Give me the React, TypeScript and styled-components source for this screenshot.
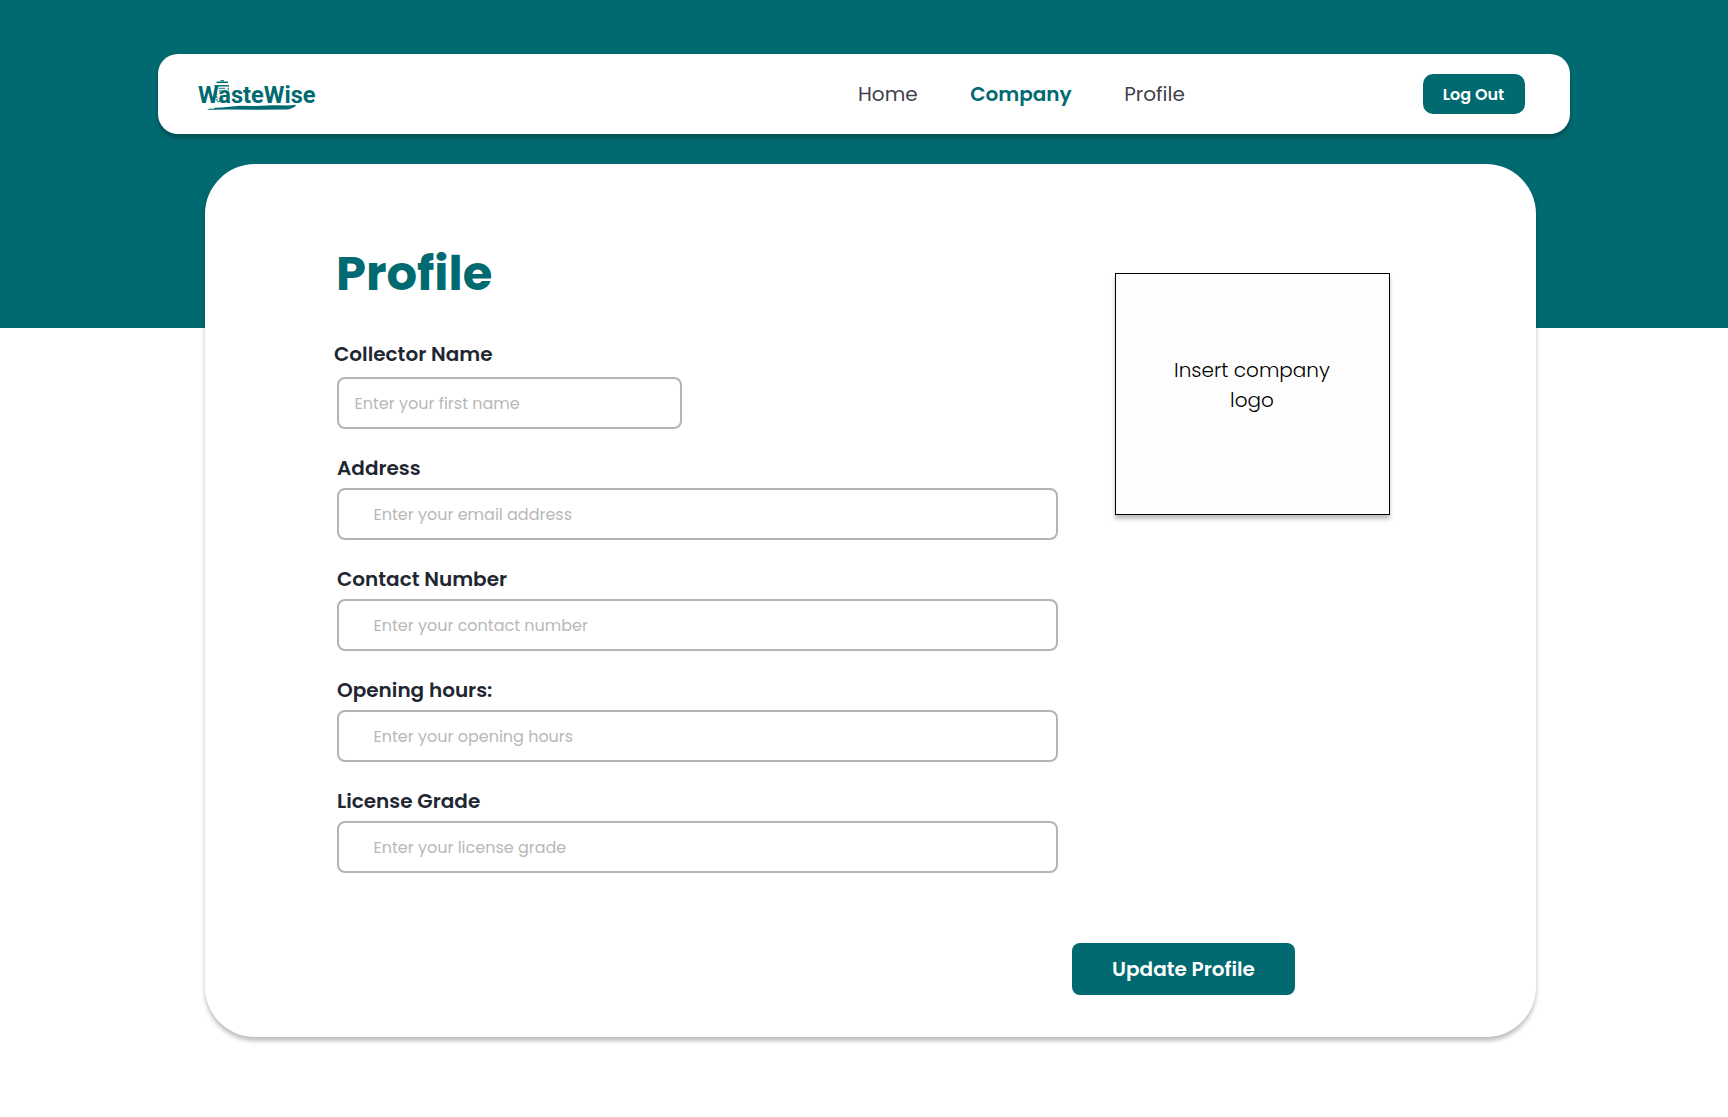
import React from 'react';
import styled, { createGlobalStyle } from 'styled-components';

const teal = '#006a70';
const shadow = '0 4px 4px rgba(0, 0, 0, 0.25)';

const GlobalStyle = createGlobalStyle`
  *, *::before, *::after { box-sizing: border-box; }
  body {
    margin: 0;
    background: #fff;
    font-family: Poppins, Inter, sans-serif;
  }
`;

const Page = styled.div`
  display: flex;
  flex-direction: column;
  width: 1728px;
  height: 1117px;
  padding-top: 54px;
  background: linear-gradient(${teal} 328px, #fff 328px);
`;

const NavBar = styled.header`
  display: flex;
  align-items: center;
  width: 1412px;
  height: 80px;
  margin-left: 158px;
  padding: 0 45px 0 40px;
  border-radius: 20px;
  background: #fff;
  box-shadow: ${shadow};
`;

const LogoMark = styled.svg`
  flex: none;
  width: 120px;
  height: 34px;
  margin-bottom: -2px;
`;

const NavLinks = styled.nav`
  display: flex;
  gap: 52.5px;
  margin-left: 540px;
`;

const NavLink = styled.a<{ $active?: boolean }>`
  font-size: 20px;
  line-height: 30px;
  font-weight: ${(p) => (p.$active ? 600 : 400)};
  color: ${(p) => (p.$active ? teal : '#41414d')};
  text-decoration: none;
`;

const Button = styled.button`
  border: 0;
  padding: 0;
  background: ${teal};
  color: #fff;
  font-family: inherit;
  font-weight: 600;
`;

const LogOutButton = styled(Button)`
  width: 102px;
  height: 40px;
  margin-left: auto;
  padding-right: 1px;
  border-radius: 10px;
  font-size: 16px;
`;

const Card = styled.main`
  width: 1331px;
  height: 873px;
  margin: 30px 0 0 205px;
  padding: 73px 0 0 132px;
  border-radius: 50px;
  background: #fff;
  box-shadow: ${shadow};
`;

const Columns = styled.div`
  display: flex;
  align-items: flex-start;
  gap: 57px;
`;

const Form = styled.form`
  display: flex;
  flex-direction: column;
  width: 721px;
`;

const Title = styled.h1`
  margin: 0 0 28px -1px;
  font-size: 48px;
  line-height: 74px;
  font-weight: 700;
  color: ${teal};
`;

const Fields = styled.div`
  display: flex;
  flex-direction: column;
  gap: 24px;
`;

const Field = styled.div<{ $short?: boolean }>`
  display: flex;
  flex-direction: column;
  gap: ${(p) => (p.$short ? 8 : 5)}px;
`;

const Label = styled.label<{ $short?: boolean }>`
  margin-left: ${(p) => (p.$short ? -3 : 0)}px;
  font-size: 20px;
  line-height: 30px;
  font-weight: 600;
  color: #1f2732;
`;

const Input = styled.input<{ $short?: boolean }>`
  width: ${(p) => (p.$short ? '345px' : '100%')};
  height: 52px;
  padding: 0 16px 0 ${(p) => (p.$short ? 15.5 : 34.5)}px;
  border: 2px solid #b4b4b4;
  border-radius: 8px;
  background: transparent;
  outline: none;
  font-family: inherit;
  font-size: 16px;
  color: #1f2732;

  &::placeholder {
    color: #b8b8b8;
    opacity: 1;
  }
`;

const LogoUpload = styled.div`
  width: 275px;
  height: 242px;
  margin-top: 36px;
  padding: 81px 50px 0 49px;
  border: 1px solid #000;
  box-shadow: ${shadow};
  background: #fdfdfd;
  font-size: 20px;
  line-height: 30px;
  font-weight: 300;
  text-align: center;
  color: #000;
`;

const UpdateButton = styled(Button)`
  width: 223px;
  height: 52px;
  margin: 70px 0 0 735px;
  border-radius: 8px;
  font-size: 20px;
`;

const links = [
  { name: 'Home' },
  { name: 'Company', active: true },
  { name: 'Profile' },
];

const fields = [
  { label: 'Collector Name', hint: 'Enter your first name', short: true },
  { label: 'Address', hint: 'Enter your email address' },
  { label: 'Contact Number', hint: 'Enter your contact number' },
  { label: 'Opening hours:', hint: 'Enter your opening hours' },
  { label: 'License Grade', hint: 'Enter your license grade' },
];

function Logo() {
  return (
    <LogoMark viewBox="0 0 120 34" role="img" aria-label="WasteWise">
      <text
        x="0"
        y="24.5"
        fill={teal}
        fontFamily="Roboto, sans-serif"
        fontWeight="700"
        fontSize="24"
        textLength="117.5"
        lengthAdjust="spacingAndGlyphs"
      >
        WasteWise
      </text>
      <g fill="none" stroke={teal}>
        <path d="M22.5 2.8h3.5" strokeWidth="1.2" />
        <path d="M18.5 4.3h11.5" strokeWidth="1.5" />
        <path d="M16.5 7.8h14.5" strokeWidth="1.4" />
        <path d="M18.2 8.5l.9 15.2h10.4l.8-15.2" strokeWidth="1" strokeDasharray="2.4 .7" />
        <path d="M20.5 10.3h7M21 13.2l2-1.3M22.5 17.5l1.5 1.2M23 21h2.5" strokeWidth=".9" />
      </g>
      <path
        fill={teal}
        d="M9 31.7 12 30.6 15 30.9 17 29.8 24 29.4 34 28.6 42 27.7 58 28 75 27.3 90 27.6 98 26.8 97 28.7 92 31 89 31.6 60 31.8 30 31.4 14 31.7Z"
      />
    </LogoMark>
  );
}

export default function App() {
  return (
    <>
      <GlobalStyle />
      <Page>
        <NavBar>
          <Logo />
          <NavLinks>
            {links.map((l) => (
              <NavLink key={l.name} $active={l.active}>
                {l.name}
              </NavLink>
            ))}
          </NavLinks>
          <LogOutButton>Log Out</LogOutButton>
        </NavBar>
        <Card>
          <Columns>
            <Form>
              <Title>Profile</Title>
              <Fields>
                {fields.map((f, i) => (
                  <Field key={f.label} $short={f.short}>
                    <Label htmlFor={`field-${i}`} $short={f.short}>
                      {f.label}
                    </Label>
                    <Input id={`field-${i}`} placeholder={f.hint} $short={f.short} />
                  </Field>
                ))}
              </Fields>
            </Form>
            <LogoUpload>Insert company logo</LogoUpload>
          </Columns>
          <UpdateButton>Update Profile</UpdateButton>
        </Card>
      </Page>
    </>
  );
}
